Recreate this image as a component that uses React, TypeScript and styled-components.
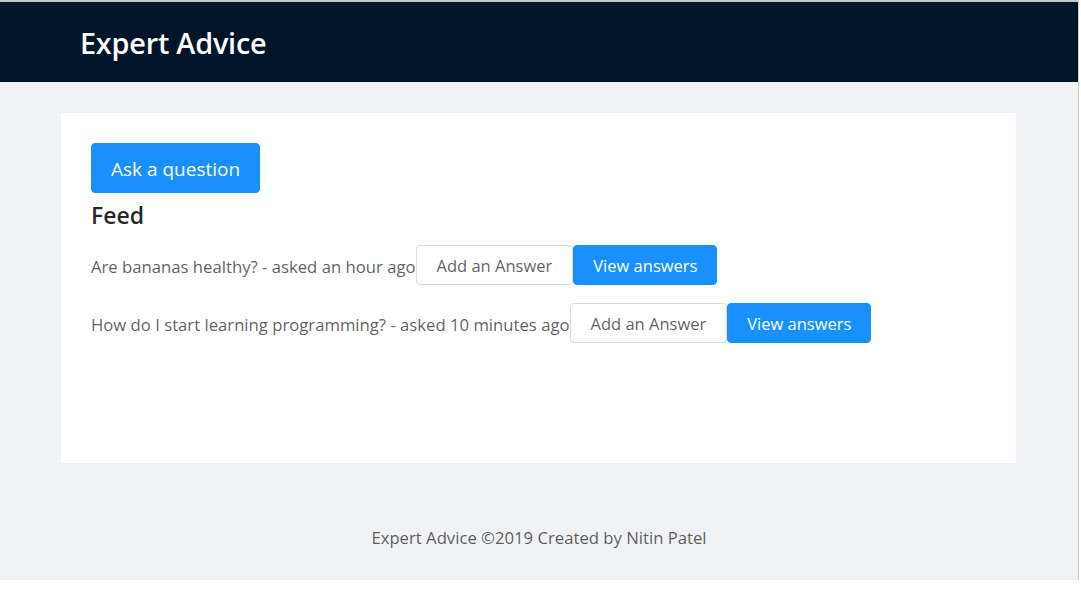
import React, { FC } from 'react';
import styled, { createGlobalStyle } from 'styled-components';

const GlobalStyle = createGlobalStyle`
  html, body {
    margin: 0;
    padding: 0;
    background: #fff;
  }
  body {
    font-family: 'Open Sans', 'Noto Sans', sans-serif;
  }
  * {
    box-sizing: border-box;
  }
`;

const Frame = styled('div')`
  width: 1079px;
  border-top: 2px solid #c6c6c6;
  border-right: 1px solid #cfcfcf;
`;

const Layout = styled('div')`
  display: flex;
  flex-direction: column;
  background: #f0f2f5;
  height: 578px;
`;

const Header = styled('header')`
  height: 80px;
  padding: 0 80px;
  display: flex;
  align-items: center;
  background: #001529;
  .logo {
    color: #fff;
    font-size: 28.8px;
    font-weight: 600;
    letter-spacing: -0.2px;
  }
`;

const Content = styled('main')`
  padding: 31px 62px 0 61px;
`;

const Card = styled('div')`
  height: 350px;
  padding: 30px;
  background: #fff;
`;

const Button = styled('button')<{ $primary?: boolean; $large?: boolean }>`
  height: ${p => (p.$large ? '50px' : '40px')};
  padding: 3px ${p => (p.$primary ? '19px' : '20px')} 0;
  font-family: inherit;
  font-size: ${p => (p.$large ? '19px' : '16.5px')};
  line-height: 1;
  border-radius: 4px;
  cursor: pointer;
  border: 1px solid ${p => (p.$primary ? '#1890ff' : '#d9d9d9')};
  background: ${p => (p.$primary ? '#1890ff' : '#fff')};
  color: ${p => (p.$primary ? '#fff' : 'rgba(0, 0, 0, 0.65)')};
`;

const FeedTitle = styled('h2')`
  margin: 8px 0 16px;
  font-size: 23px;
  font-weight: 600;
  line-height: 28px;
  color: rgba(0, 0, 0, 0.85);
`;

const List = styled('div')`
  display: flex;
  flex-direction: column;
  gap: 18px;
`;

const Row = styled('div')`
  display: flex;
  align-items: center;
  font-size: 16.7px;
  color: rgba(0, 0, 0, 0.65);
  span {
    padding-top: 2px;
  }
`;

const Footer = styled('footer')`
  flex: 1;
  display: flex;
  align-items: center;
  justify-content: center;
  padding-top: 32px;
  font-size: 16.7px;
  color: rgba(0, 0, 0, 0.65);
`;

type Question = { text: string; asked: string };

const questions: Question[] = [
  { text: 'Are bananas healthy?', asked: 'an hour ago' },
  { text: 'How do I start learning programming?', asked: '10 minutes ago' },
];

const App: FC = () => {
  return (
    <Frame>
      <GlobalStyle />
      <Layout>
        <Header>
          <div className="logo">Expert Advice</div>
        </Header>
        <Content>
          <Card>
            <Button $primary $large>
              Ask a question
            </Button>
            <FeedTitle>Feed</FeedTitle>
            <List>
              {questions.map((q, index) => (
                <Row key={`question${index}`}>
                  <span>
                    {q.text} - asked {q.asked}
                  </span>
                  <Button>Add an Answer</Button>
                  <Button $primary>View answers</Button>
                </Row>
              ))}
            </List>
          </Card>
        </Content>
        <Footer>Expert Advice ©2019 Created by Nitin Patel</Footer>
      </Layout>
    </Frame>
  );
};

export default App;
